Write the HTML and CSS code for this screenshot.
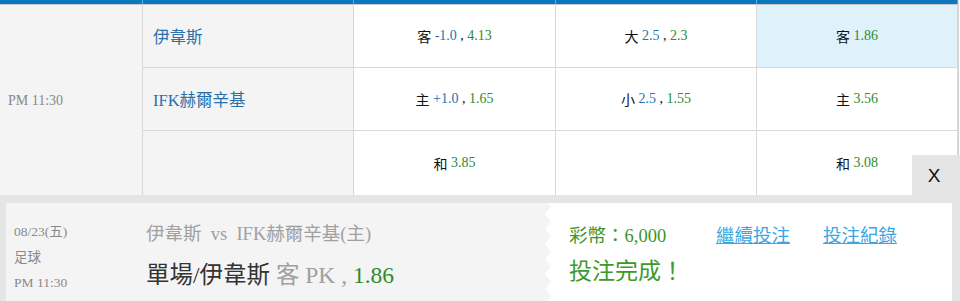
FILE: index.html
```html
<!DOCTYPE html>
<html lang="zh-Hant">
<head>
<meta charset="utf-8">
<title>投注</title>
<link rel="stylesheet" href="styles.css">
</head>
<body>
<div class="page">
  <div class="board">
    <div class="topbar">
      <span></span><span></span><span></span><span></span><span></span>
    </div>
    <div class="grid">
      <div class="cell time">PM 11:30</div>
      <div class="cell team">伊韋斯</div>
      <div class="cell odd">客 <b class="blue">-1.0</b> , <b class="green">4.13</b></div>
      <div class="cell odd">大 <b class="blue">2.5</b> , <b class="green">2.3</b></div>
      <div class="cell odd sel">客 <b class="green">1.86</b></div>

      <div class="cell team">IFK赫爾辛基</div>
      <div class="cell odd">主 <b class="blue">+1.0</b> , <b class="green">1.65</b></div>
      <div class="cell odd">小 <b class="blue">2.5</b> , <b class="green">1.55</b></div>
      <div class="cell odd">主 <b class="green">3.56</b></div>

      <div class="cell team"></div>
      <div class="cell odd">和 <b class="green">3.85</b></div>
      <div class="cell odd"></div>
      <div class="cell odd">和 <b class="green">3.08</b></div>
    </div>
    <div class="close">X</div>
  </div>

  <div class="result">
    <div class="panel">
      <div class="ticket">
        <div class="meta">
          <div>08/23(五)</div>
          <div>足球</div>
          <div>PM 11:30</div>
        </div>
        <div class="bet">
          <div class="match">伊韋斯&nbsp; vs&nbsp; IFK赫爾辛基(主)</div>
          <div class="pick"><span class="dark">單場/伊韋斯</span> 客 PK , <span class="green">1.86</span></div>
        </div>
      </div>
      <svg class="zig" width="6" height="98" viewBox="0 0 6 98" preserveAspectRatio="none" aria-hidden="true">
        <defs>
          <pattern id="teeth" width="6" height="15" patternUnits="userSpaceOnUse" y="-4">
            <polygon points="0,0 6,7.5 0,15" fill="#f4f4f4"/>
          </pattern>
        </defs>
        <rect width="6" height="98" fill="#fff"/>
        <rect width="6" height="98" fill="url(#teeth)"/>
      </svg>
      <div class="done">
        <div class="row1">
          <span class="coins">彩幣：6,000</span>
          <a class="link" href="#">繼續投注</a>
          <a class="link" href="#">投注紀錄</a>
        </div>
        <div class="ok">投注完成！</div>
      </div>
    </div>
  </div>
</div>
</body>
</html>
```

FILE: styles.css
```css
html, body {
  margin: 0;
  padding: 0;
  background: #ffffff;
}
body {
  font-family: "Liberation Serif", "Noto Sans CJK TC", serif;
  width: 960px;
  height: 301px;
  overflow: hidden;
}
.page {
  width: 960px;
}
.board {
  position: relative;
  width: 958px;
  border-right: 1px solid #d4d4d4;
}
.topbar {
  display: grid;
  grid-template-columns: 142px 210px 201px 200px 200px;
  column-gap: 1px;
  background: #4fb0e8;
  height: 4px;
  border-right: 1px solid #4fb0e8;
}
.topbar span {
  background: #0a77be;
}
.grid {
  display: grid;
  grid-template-columns: 142px 210px 201px 200px 200px;
  grid-template-rows: 62px 62px 64px;
  gap: 1px;
  background: #d8d8d8;
  border-top: 1px solid #c8c8c8;
}
.cell {
  display: flex;
  align-items: center;
  background: #ffffff;
}
.time {
  grid-row: 1 / span 3;
  background: #f4f4f4;
  color: #888888;
  font-size: 14px;
  padding-left: 8px;
  padding-top: 2px;
}
.team {
  background: #f4f4f4;
  color: #2a70aa;
  font-size: 16.5px;
  padding-left: 10px;
}
.odd {
  justify-content: center;
  font-family: "Liberation Serif", "Noto Sans CJK TC", serif;
  font-size: 14px;
  color: #111111;
  white-space: pre;
}
.odd b {
  font-weight: normal;
}
.sel {
  background: #dff2fb;
}
.blue {
  color: #1f72b4;
}
.green {
  color: #2e8b2e;
}
.close {
  position: absolute;
  left: 912px;
  top: 155px;
  width: 48px;
  height: 42px;
  background: #e5e5e5;
  display: flex;
  align-items: center;
  justify-content: center;
  font-family: "Liberation Sans", sans-serif;
  font-size: 19px;
  color: #111111;
  padding-right: 4px;
  box-sizing: border-box;
}
.result {
  background: #e5e5e5;
  padding: 8px 8px 0 6px;
  height: 106px;
  box-sizing: border-box;
}
.panel {
  display: flex;
  height: 98px;
}
.ticket {
  width: 539px;
  background: #f4f4f4;
  display: flex;
  padding-left: 8px;
  box-sizing: border-box;
}
.meta {
  width: 132px;
  padding-top: 16px;
  color: #8a8a8a;
  font-size: 13.5px;
  line-height: 25.5px;
}
.bet {
  padding-top: 19px;
}
.match {
  color: #a0a0a0;
  font-size: 18.5px;
  line-height: 24px;
}
.pick {
  margin-top: 13px;
  color: #a0a0a0;
  font-size: 23.5px;
  line-height: 32px;
}
.pick .dark {
  color: #333333;
}
.zig {
  display: block;
  width: 6px;
  height: 98px;
  flex: none;
}
.done {
  flex: 1;
  background: #ffffff;
  padding-left: 18px;
  padding-top: 21px;
}
.row1 {
  display: flex;
  align-items: center;
  font-size: 18.5px;
  line-height: 24px;
}
.coins {
  color: #3b962b;
  width: 147px;
}
.link {
  color: #3aa6e2;
  text-decoration: underline;
  margin-right: 33px;
}
.ok {
  margin-top: 9px;
  color: #3b9a2b;
  font-size: 23px;
  line-height: 30px;
}
```
